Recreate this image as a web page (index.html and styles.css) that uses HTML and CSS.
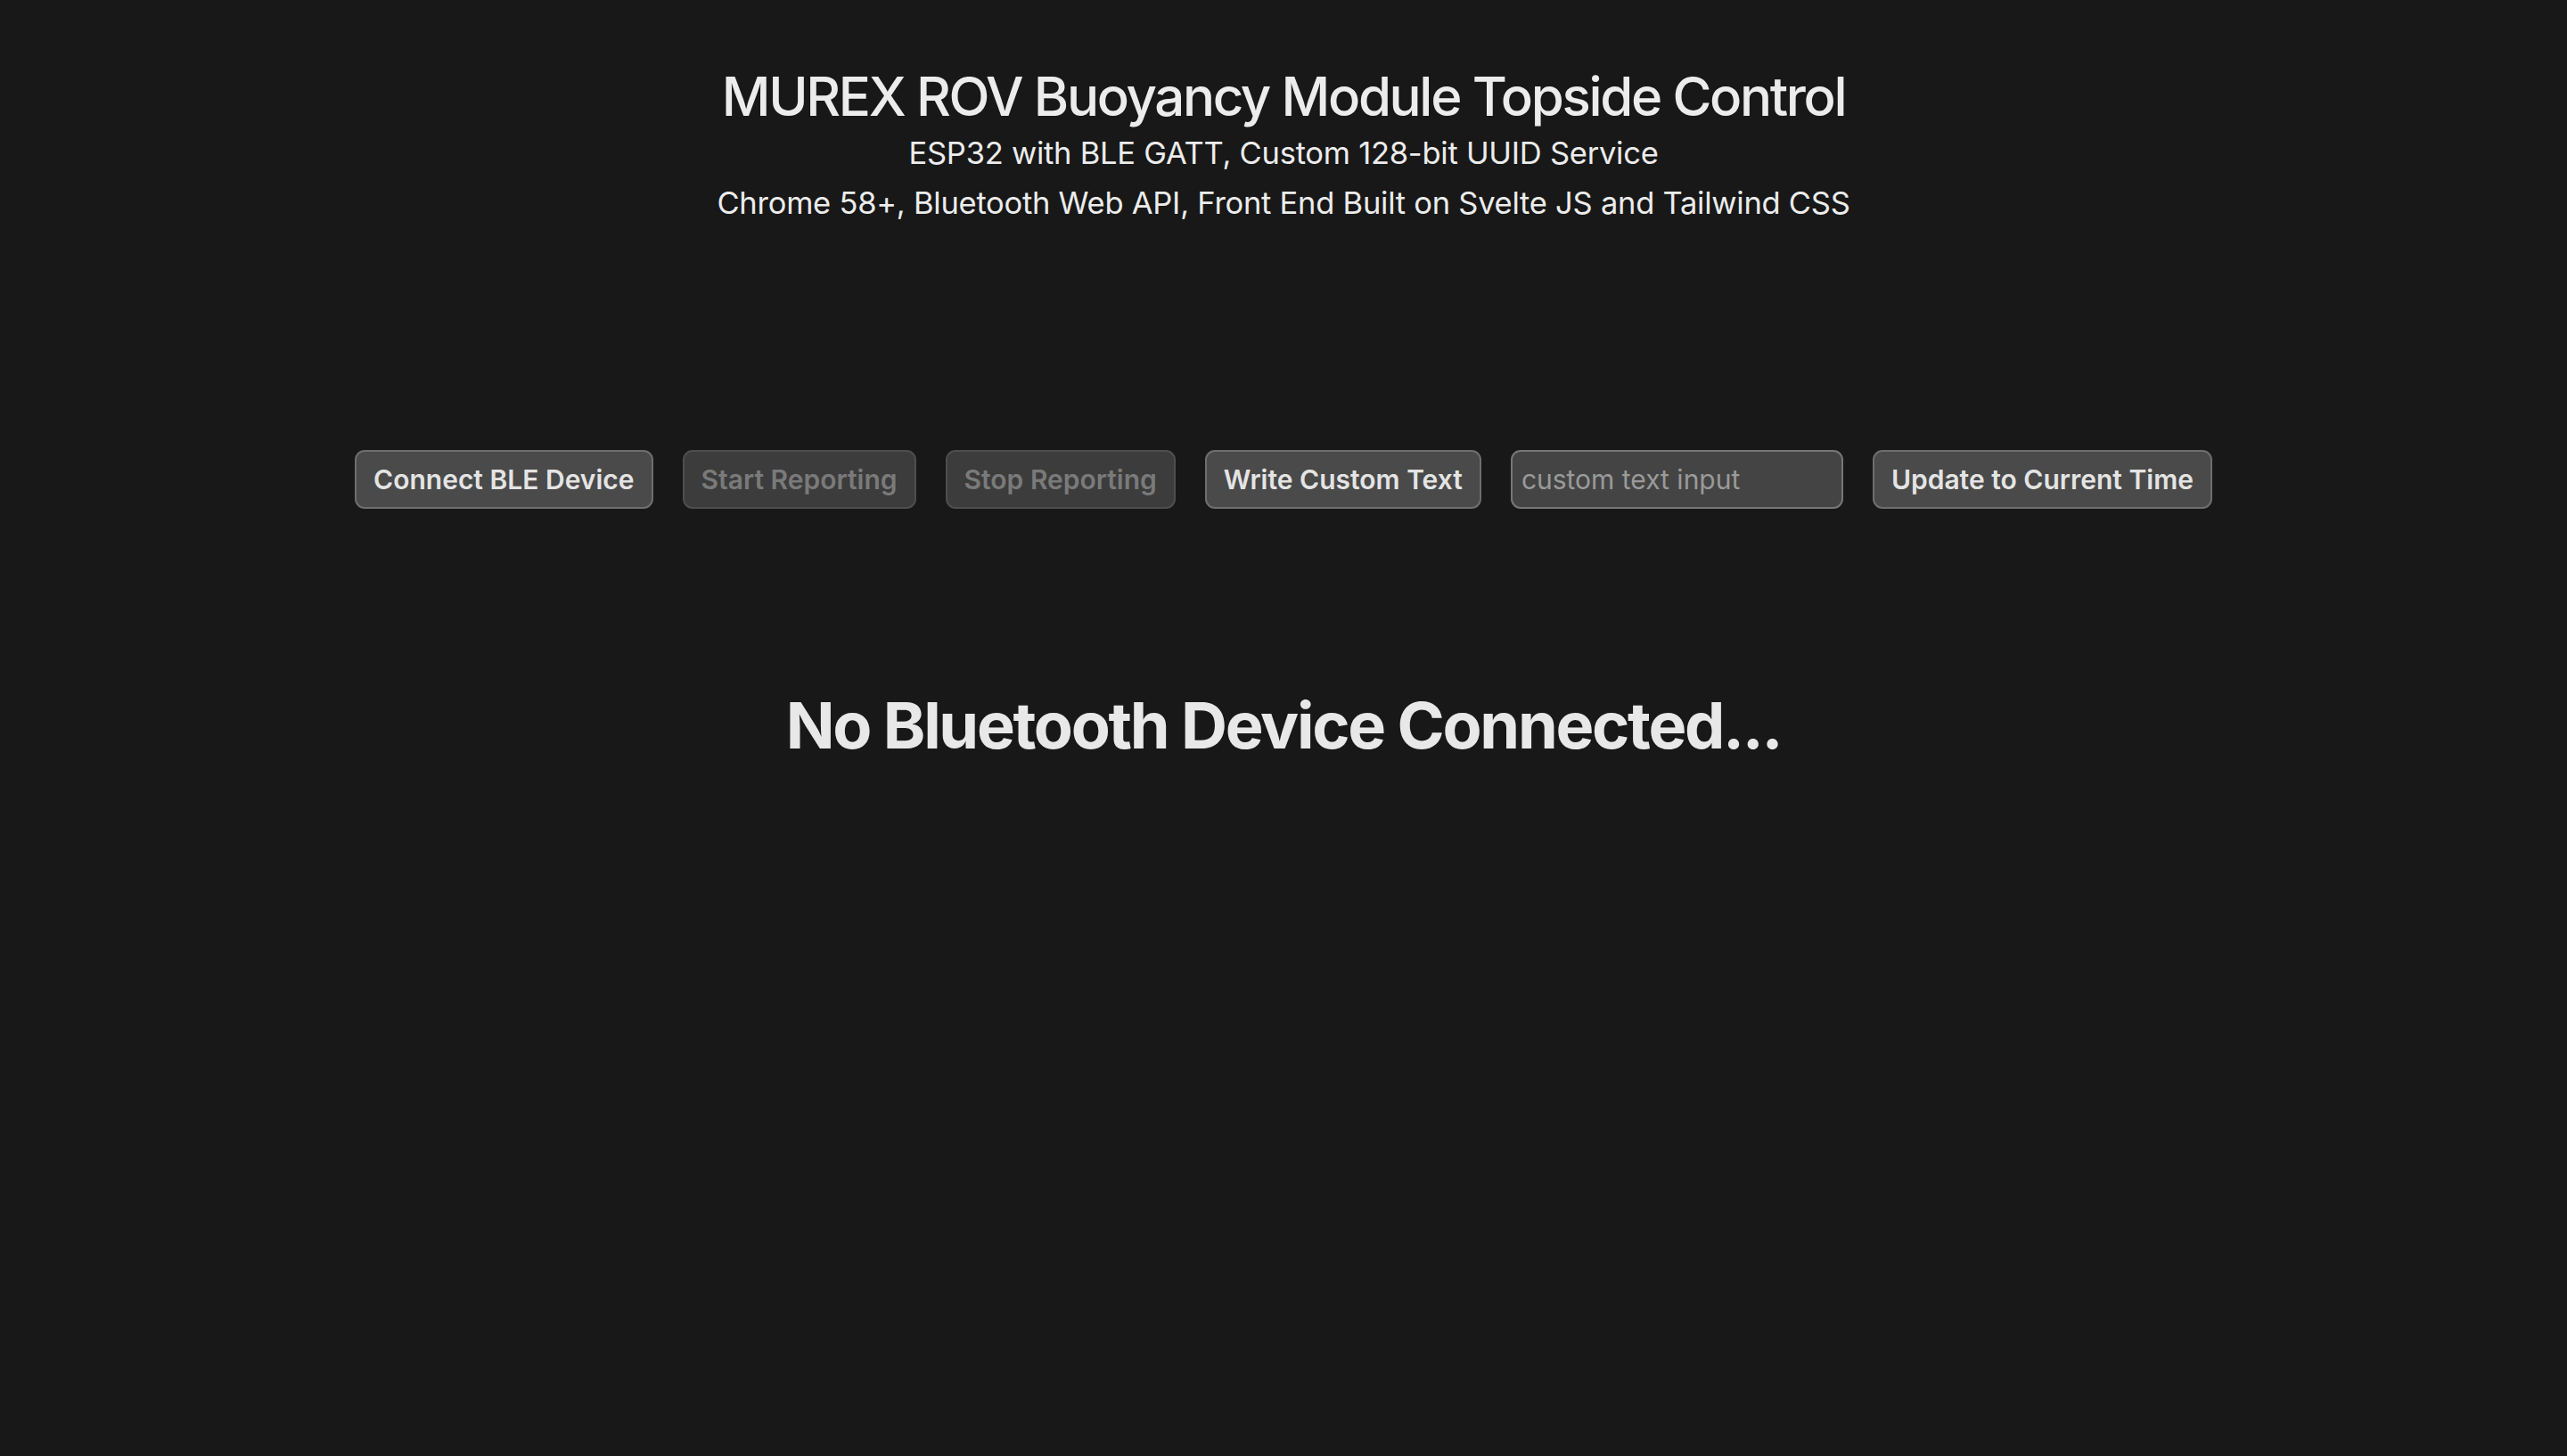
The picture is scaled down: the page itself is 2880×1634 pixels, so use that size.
FILE: index.html
```html
<!DOCTYPE html>
<html lang="en">
<head>
<meta charset="utf-8">
<title>MUREX ROV Buoyancy Module Topside Control</title>
<link rel="stylesheet" href="styles.css">
</head>
<body>
<main class="page">
  <header class="header">
    <h1 class="title">MUREX ROV Buoyancy Module Topside Control</h1>
    <p class="subtitle">ESP32 with BLE GATT, Custom 128-bit UUID Service</p>
    <p class="subtitle">Chrome 58+, Bluetooth Web API, Front End Built on Svelte JS and Tailwind CSS</p>
  </header>
  <section class="controls">
    <button class="btn">Connect BLE Device</button>
    <button class="btn" disabled>Start Reporting</button>
    <button class="btn" disabled>Stop Reporting</button>
    <button class="btn">Write Custom Text</button>
    <input class="text-input" type="text" placeholder="custom text input">
    <button class="btn">Update to Current Time</button>
  </section>
  <h2 class="status">No Bluetooth Device Connected...</h2>
</main>
</body>
</html>
```
FILE: styles.css
```css
html, body {
  margin: 0;
  padding: 0;
  background: #181818;
  min-height: 100%;
}
body {
  font-family: Inter, "Noto Sans", "Liberation Sans", sans-serif;
  color: #ececec;
  height: 1634px;
}
.page {
  display: flex;
  flex-direction: column;
  align-items: center;
  padding-top: 72px;
}
.header {
  display: flex;
  flex-direction: column;
  align-items: center;
}
.title {
  margin: 0;
  font-size: 60px;
  line-height: 72px;
  font-weight: 500;
  letter-spacing: -2.35px;
}
.subtitle {
  margin: 0;
  font-size: 34.5px;
  line-height: 56px;
  font-weight: 400;
  letter-spacing: -0.25px;
}
.controls {
  margin-top: 249px;
  display: flex;
  gap: 33px;
  align-items: center;
}
.btn {
  font-family: inherit;
  font-size: 30px;
  line-height: 40px;
  font-weight: 600;
  color: #e4e4e4;
  background: #4a4a4a;
  border: 2px solid #6e6e6e;
  border-radius: 11px;
  padding: 11px 19px;
  letter-spacing: 0;
}
.btn:disabled {
  color: #7a7a7a;
  background: #3c3c3c;
  border-color: #4e4e4e;
}
.text-input {
  font-family: inherit;
  font-size: 30px;
  line-height: 40px;
  font-weight: 400;
  color: #e4e4e4;
  background: #444444;
  border: 2px solid #777777;
  border-radius: 11px;
  padding: 11px 10px;
  width: 349px;
  box-sizing: content-box;
  outline: none;
}
.text-input::placeholder {
  color: #9a9a9a;
}
.status {
  margin: 200px 0 0;
  font-size: 72px;
  line-height: 86px;
  font-weight: 700;
  letter-spacing: -2.3px;
  color: #e8e8e8;
}
```
